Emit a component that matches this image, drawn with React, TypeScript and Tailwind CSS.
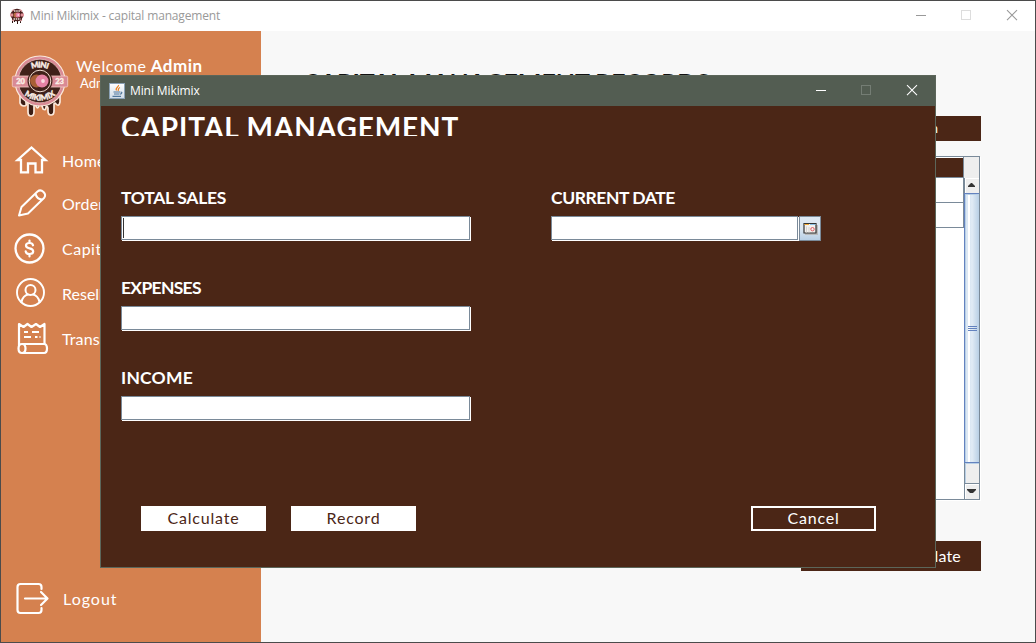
import React from "react";

const stroke = {
  fill: "none",
  stroke: "#fff",
  strokeLinecap: "round" as const,
  strokeLinejoin: "round" as const,
};

function BrandLogo({ className }: { className: string }) {
  return (
    <svg className={className} viewBox="10 54 60 64">
      <path
        d="M20 92v11q1 3 4 3t2-3v-2q1-2 2 0v11q0 4 3 4t3-4v-6q1-2 2 0 2 4 3-1 2-3 3 1l1 3q3 2 3-2 1-2 2 1v3q0 4 3 4t3-4v-7q1-2 2 0 3 3 4-2v-12z"
        fill="#3b1d14"
        stroke="#fbe9dc"
        strokeWidth="1.7"
      />
      <circle cx="40" cy="81" r="25" fill="#d98a95" stroke="#fbe9dc" strokeWidth="1.2" />
      <circle cx="40" cy="81" r="21.800" fill="#40211a" stroke="#f3c4c0" strokeWidth="0.7" />
      <rect x="12.3" y="76" width="55.4" height="11" rx="1.5" fill="#d98a95" stroke="#f6cfc8" strokeWidth="0.8" />
      <circle cx="40" cy="81" r="12.500" fill="#40211a" />
      <circle cx="40" cy="81" r="10.800" fill="#40211a" stroke="#f2ded2" strokeWidth="1" />
      <circle cx="36.5" cy="81" r="6.4" fill="#a85f35" />
      <circle cx="42" cy="81" r="6.5" fill="#e583a5" />
      <circle cx="43" cy="81" r="1.9" fill="#f9dbe0" />
      <path id="arcTop" d="M20 73A25 25 0 0 1 60 73" fill="none" />
      <path id="arcBottom" d="M19 89A25 25 0 0 0 61 89" fill="none" />
      <g
        fill="#fbeee6"
        stroke="#fbeee6"
        strokeWidth="0.400"
        fontFamily="Lato, sans-serif"
        fontWeight="900"
        textAnchor="middle"
      >
        <text fontSize="8" dy="4.500">
          <textPath href="#arcTop" startOffset="50%">MINI</textPath>
        </text>
        <text fontSize="8" dy="0">
          <textPath href="#arcBottom" startOffset="50%">MIKIMIX</textPath>
        </text>
        <text x="20.500" y="84.300" fontSize="7.500">20</text>
        <text x="59.500" y="84.300" fontSize="7.500">23</text>
      </g>
    </svg>
  );
}

function TitleIcon() {
  return (
    <svg className="h-4 w-4" viewBox="0 0 16 16">
      <path d="M3 10h10v3h-1v2h-1v-3h-1v1H9v3H8v-3H6v1H5v-2H4v3H3z" fill="#2d1511" />
      <circle cx="8" cy="7" r="6.300" fill="#4a1f1d" />
      <path d="M3 3l2-1.500M11 1.500l2 2M3 12l2 1M11 13l2-1" stroke="#e0a0a4" strokeWidth="1.200" />
      <path d="M5 3h6M4.500 11h7" stroke="#efe3dc" strokeWidth="1.500" strokeDasharray="1.500 .7" />
      <path d="M1 5.500h3v3H1zM12 5.500h3v3h-3z" fill="#df9299" />
      <circle cx="7" cy="7" r="2.600" fill="#b56a42" />
      <circle cx="9" cy="7" r="2.500" fill="#e77d9c" />
      <circle cx="9.200" cy="7" r=".8" fill="#fff" />
    </svg>
  );
}

function JavaIcon() {
  return (
    <svg className="h-4 w-4" viewBox="0 0 16 16">
      <defs>
        <linearGradient id="tile" x2="0" y2="1">
          <stop stopColor="#fff" />
          <stop offset="1" stopColor="#cfdbe6" />
        </linearGradient>
      </defs>
      <rect x=".5" y=".5" width="15" height="15" fill="url(#tile)" stroke="#8ba1b5" />
      <path d="M9.500 2C10 4 6 4.500 7.500 7.500M11 4.500C8.500 5.500 10 6.500 9 8" fill="none" stroke="#ec8021" strokeWidth="1.200" />
      <path d="M4.500 9h6.500M5 11h5.500M3.500 13.300h8.500M11.500 9q2 0 1 1.500l-1.500.8" fill="none" stroke="#50779b" strokeWidth="1.200" />
    </svg>
  );
}

function WindowButtons({ color, faded }: { color: string; faded: string }) {
  return (
    <svg className="h-[30px] w-[135px] shrink-0" viewBox="0 0 135 30" fill="none">
      <path d="M16 14.500h10" stroke={color} />
      <rect x="61.500" y="9.500" width="9" height="9" stroke={faded} />
      <path d="M107 9.200l10 10M117 9.200l-10 10" stroke={color} strokeWidth="1.100" />
    </svg>
  );
}

const navItems = [
  {
    label: "Home",
    textClass: "pt-[2px] tracking-[0.3px]",
    viewBox: "1 137 50 45",
    icon: (
      <path
        d="M17.500 160L31.500 147.500 45.500 160H42V172.300H35.500V163.500H28V172.300H21V160z"
        strokeWidth="2.300"
        strokeLinejoin="miter"
      />
    ),
  },
  {
    label: "Orders",
    textClass: "pb-[2px] tracking-[0.2px]",
    viewBox: "1 182 50 45",
    icon: (
      <path
        d="M19 215.500L21.500 207 37.500 191.500Q40.500 189 43.500 192 46.500 195 44 198L28 213.500zM35.500 193.500Q36.500 199 42 199.500"
        strokeWidth="2"
      />
    ),
  },
  {
    label: "Capital",
    textClass: "pb-[2px] tracking-[0.5px]",
    viewBox: "1 227 50 45",
    icon: (
      <>
        <circle cx="29.500" cy="248.500" r="14" strokeWidth="2.300" />
        <path
          d="M33 245.300Q32.500 243 29.500 243 26 243 26 245.500 26 247.700 29.500 248.300 33.200 249 33.200 251.500 33.200 254 29.500 254 26 254 25.700 251.300M29.500 240.500V243M29.500 254v2.500"
          strokeWidth="2.200"
        />
      </>
    ),
  },
  {
    label: "Reseller",
    textClass: "pb-[2px] tracking-[0px]",
    viewBox: "1 272 50 45",
    icon: (
      <>
        <circle cx="30.500" cy="292.500" r="13.500" strokeWidth="1.900" />
        <circle cx="30.500" cy="290" r="5" strokeWidth="2" />
        <path d="M21.500 302Q23 295.500 28 294.500M33 294.500Q38 295.500 39.500 302" strokeWidth="2" />
      </>
    ),
  },
  {
    label: "Transaction",
    textClass: "pb-[2px] tracking-[0.1px]",
    viewBox: "1 317 50 45",
    icon: (
      <>
        <path
          d="M19 346V324l4.500 3 4-3 4 3 4.500-3 4 3 4.500-3V344M22 344H44Q47 344 47 348.500T44 353H22Q18.500 353 18.500 348.500T22 344 25.500 348.500 22 353"
          strokeWidth="2.200"
        />
        <path d="M24 332h4M32 332h7M24 337h7M35 337h2.500M39.500 337h1" strokeWidth="2" strokeLinecap="butt" />
      </>
    ),
  },
];

function FieldLabel({ text, tracking }: { text: string; tracking: string }) {
  return (
    <div className={`h-[30px] whitespace-nowrap pt-[2px] text-[17.5px] leading-[22px] font-bold ${tracking}`}>{text}</div>
  );
}

function Field({ label, tracking, active = false }: { label: string; tracking: string; active?: boolean }) {
  return (
    <div className="h-[90px]">
      <FieldLabel text={label} tracking={tracking} />
      <div className="mt-px flex h-6 w-[349px] border border-[#7a8a99] bg-white p-px shadow-[1px_1px_0_#fff]">
        {active && <span className="h-5 w-px bg-[#333]" />}
      </div>
    </div>
  );
}

function CapitalDialog() {
  return (
    <section className="absolute top-[74px] left-[99px] flex h-[493px] w-[836px] flex-col border border-[#5c665a] bg-[#4b2616] text-white">
      <header className="flex h-[30px] shrink-0 items-center bg-[#535d52] pl-2 font-['Open_Sans',sans-serif] text-[12px] tracking-[-0.1px]">
        <JavaIcon />
        <span className="ml-[5px] flex-1">Mini Mikimix</span>
        <WindowButtons color="#fff" faded="#747d74" />
      </header>
      <div className="flex flex-1 flex-col pl-5">
        <h2 className="mt-[4px] h-[26px] overflow-hidden whitespace-nowrap text-[28px] leading-[34px] font-bold tracking-[0.9px]">
          CAPITAL MANAGEMENT
        </h2>
        <div className="mt-[49px] flex">
          <div className="w-[430px]">
            <Field label="TOTAL SALES" tracking="tracking-[-0.3px]" active />
            <Field label="EXPENSES" tracking="tracking-[-0.7px]" />
            <Field label="INCOME" tracking="tracking-[0.2px]" />
          </div>
          <div>
            <FieldLabel text="CURRENT DATE" tracking="tracking-[-0.45px]" />
            <div className="mt-px flex">
              <div className="h-6 w-[247px] border border-[#7a8a99] bg-white shadow-[1px_1px_0_#fff]" />
              <button className="ml-px flex h-[25px] w-[22px] items-center justify-center border border-[#7a8a99] bg-linear-to-b from-[#dfe9f3] via-[#dce7f1] to-[#b8cfe5]">
                <svg className="h-3 w-[15px] shrink-0" viewBox="0 0 15 12">
                  <path d="M2 2h13v10H2z" fill="#b9babb" />
                  <path d="M1 .5h12v9.500H1z" fill="#f3f1ef" stroke="#333" strokeWidth="1.200" />
                  <path d="M1.500 1.500h4.500" stroke="#f5ac35" />
                  <path d="M7 1.500h5.500" stroke="#8cc3e6" />
                  <path d="M3.500 3.500v6M6 4v5.500" stroke="#d6d3d0" />
                  <circle cx="9.500" cy="6.200" r="1.700" fill="none" stroke="#df5960" />
                </svg>
              </button>
            </div>
          </div>
        </div>
        <div className="mt-[51px] flex h-[25px] pl-5 text-[16px] tracking-[0.8px]">
          <button className="w-[125px] bg-white pb-px leading-6 text-[#4b2616]">Calculate</button>
          <button className="ml-[25px] w-[125px] bg-white pb-px leading-6 text-[#4b2616]">Record</button>
          <button className="ml-[335px] w-[125px] border-2 border-white pb-px leading-5">Cancel</button>
        </div>
      </div>
    </section>
  );
}

function Scrollbar() {
  return (
    <div className="flex w-[15px] flex-col">
      <div className="flex h-[15px] items-center justify-center border-l border-[#7a8a99] bg-[#eee] pr-px pb-px shadow-[inset_1px_1px_0_#fff]">
        <svg className="h-1 w-[7px]" viewBox="0 0 7 4"><path d="M3 0h1l3 3v1H0V3z" fill="#333" /></svg>
      </div>
      <div className="flex h-[270px] flex-col items-center justify-center gap-px border-y border-l border-[#6382bf] bg-linear-to-r from-[#c8dcef] via-[#e1ebf5] to-[#b8cfe5] shadow-[inset_1px_1px_0_#b8cfe5,inset_3px_0_0_#dbe7f3,inset_5px_0_0_#fff]">
        <i className="h-px w-[9px] bg-[#6382bf]" />
        <i className="h-px w-[9px] bg-[#6382bf]" />
        <i className="h-px w-[9px] bg-[#6382bf]" />
      </div>
      <div className="h-[21px] border-b border-l border-[#7a8a99] bg-[#eee] shadow-[inset_1px_1px_0_#b8cfe5]" />
      <div className="flex h-[15px] items-center justify-center border-l border-[#7a8a99] bg-[#eee] pr-px pb-[2px] shadow-[inset_1px_1px_0_#fff]">
        <svg className="h-1 w-[9px]" viewBox="0 0 9 4"><path d="M0 0h9v1L6 4H3L0 1z" fill="#333" /></svg>
      </div>
    </div>
  );
}

export default function App() {
  return (
    <div className="relative flex h-[643px] w-[1036px] flex-col overflow-hidden border border-[#4b4b4b] bg-white font-['Century_Gothic','URW_Gothic',Lato,sans-serif]">
      <header className="flex h-[30px] shrink-0 items-center bg-white pl-2 font-['Open_Sans',sans-serif] text-[12px] tracking-[-0.16px] text-[#999]">
        <TitleIcon />
        <span className="ml-[5px] flex-1">Mini Mikimix - capital management</span>
        <WindowButtons color="#999" faded="#ddd" />
      </header>
      <div className="flex flex-1">
        <aside className="flex w-[260px] flex-col bg-[#d5814f] text-[16px] text-white">
          <div className="flex h-[106px] pt-[23px] pl-[9px]">
            <BrandLogo className="h-16 w-[60px]" />
            <div className="pt-[3px] pl-[6px]">
              <div className="flex h-[18px] items-center gap-[4px] whitespace-nowrap leading-[18px]">
                <span className="tracking-[0.65px]">Welcome</span>
                <b className="text-[17px] tracking-[0.5px]">Admin</b>
              </div>
              <div className="pl-1 text-[13px] leading-[16px]">Admin</div>
            </div>
          </div>
          <nav>
            {navItems.map((item) => (
              <div key={item.label} className="flex h-[45px] items-center">
                <svg className="h-[45px] w-[50px]" viewBox={item.viewBox} {...stroke}>
                  {item.icon}
                </svg>
                <span className={`ml-[11px] leading-5 ${item.textClass}`}>{item.label}</span>
              </div>
            ))}
          </nav>
          <div className="mt-auto mb-[21px] flex h-[45px] items-center">
            <svg className="h-[45px] w-[50px]" viewBox="1 576 50 45" {...stroke}>
              <path
                d="M41.500 589V587Q41.500 584 38.500 584H20.500Q17.500 584 17.500 587V610Q17.500 613 20.500 613H38.500Q41.500 613 41.500 610V608M25 598.500H47M41 592l6.500 6.500-6.500 6.500"
                strokeWidth="2.200"
              />
            </svg>
            <span className="ml-3 tracking-[1px]">Logout</span>
          </div>
        </aside>
        <main className="flex flex-1 flex-col items-end bg-[#f8f8f8] pr-[54px]">
          <h1 className="mt-[34px] mr-[271px] h-[36px] whitespace-nowrap text-[25px] leading-[34px] font-bold tracking-[-0.05px] text-[#111]">
            CAPITAL MANAGEMENT RECORDS
          </h1>
          <button className="mt-[15px] h-[25px] w-[125px] bg-[#4b2616] pr-[43px] text-right text-[13px] text-white">Search</button>
          <div className="mt-[15px] mr-px flex h-[344px] w-[675px] border border-[#7a8a99] bg-white shadow-[1px_1px_0_#fff]">
            <div className="flex-1">
              <div className="h-[21px] border-r border-b border-[#7a8a99] bg-[#4b2616] shadow-[inset_0_1px_0_#fff]" />
              <div className="h-[25px] border-r border-b border-[#7a8a99]" />
              <div className="h-[25px] border-r border-b border-[#7a8a99]" />
            </div>
            <div className="flex flex-col">
              <div className="h-[21px] bg-[#eee]" />
              <Scrollbar />
            </div>
          </div>
          <button className="mt-[41px] h-[30px] w-[180px] bg-[#4b2616] pr-5 text-right text-[16px] tracking-[0.2px] text-white">
            Update
          </button>
        </main>
      </div>
      <CapitalDialog />
    </div>
  );
}
